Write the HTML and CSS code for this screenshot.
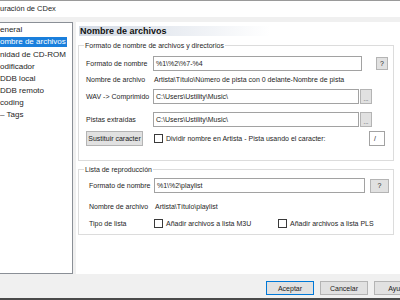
FILE: index.html
```html
<!DOCTYPE html>
<html lang="es">
<head>
<meta charset="utf-8">
<title>Configuración de CDex</title>
<link rel="stylesheet" href="styles.css">
</head>
<body>
<div class="window">
  <div class="titlebar">uración de CDex</div>
  <div class="main">
    <ul class="tree">
      <li>eneral</li>
      <li><span class="sel">ombre de archivos</span></li>
      <li>nidad de CD-ROM</li>
      <li>odificador</li>
      <li>DDB local</li>
      <li>DDB remoto</li>
      <li>coding</li>
      <li>– Tags</li>
    </ul>
    <div class="page">
      <div class="page-title">Nombre de archivos</div>

      <fieldset class="group g1">
        <legend>Formato de nombre de archivos y directorios</legend>
        <div class="row r1">
          <span class="lbl">Formato de nombre</span>
          <span class="input in-fmt">%1\%2\%7-%4</span>
          <span class="btn help1">?</span>
        </div>
        <div class="row r2">
          <span class="lbl">Nombre de archivo</span>
          <span class="val">Artista\Título\Número de pista con 0 delante-Nombre de pista</span>
        </div>
        <div class="row r3">
          <span class="lbl">WAV -&gt; Comprimido</span>
          <span class="input in-path">C:\Users\Ustility\Music\</span>
          <span class="btn browse">...</span>
        </div>
        <div class="row r4">
          <span class="lbl">Pistas extraídas</span>
          <span class="input in-path">C:\Users\Ustility\Music\</span>
          <span class="btn browse">...</span>
        </div>
        <div class="row r5">
          <span class="btn subst">Sustituir caracter</span>
          <span class="check c-split"></span>
          <span class="check-text">Dividir nombre en Artista - Pista usando el caracter:</span>
          <span class="input in-char">/</span>
        </div>
      </fieldset>

      <fieldset class="group g2">
        <legend>Lista de reproducción</legend>
        <div class="row q1">
          <span class="lbl">Formato de nombre</span>
          <span class="input in-pl">%1\%2\playlist</span>
          <span class="btn help2">?</span>
        </div>
        <div class="row q2">
          <span class="lbl">Nombre de archivo</span>
          <span class="val">Artista\Título\playlist</span>
        </div>
        <div class="row q3">
          <span class="lbl">Tipo de lista</span>
          <span class="option opt-m3u"><span class="check"></span><span class="check-text">Añadir archivos a lista M3U</span></span>
          <span class="option"><span class="check"></span><span class="check-text">Añadir archivos a lista PLS</span></span>
        </div>
      </fieldset>
    </div>
  </div>
  <div class="footer">
    <span class="btn fbtn default">Aceptar</span>
    <span class="btn fbtn">Cancelar</span>
    <span class="btn fbtn">Ayuda</span>
  </div>
</div>
</body>
</html>
```

FILE: styles.css
```css
html, body {
  margin: 0;
  padding: 0;
}
body {
  width: 400px;
  height: 300px;
  overflow: hidden;
  background: #f0f0f0;
  font-family: "Liberation Sans", Arial, sans-serif;
  color: #1e1e1e;
}
.window {
  height: 300px;
  box-sizing: border-box;
  border-bottom: 2px solid #4a4a4a;
  display: flex;
  flex-direction: column;
}
.titlebar {
  height: 17px;
  box-sizing: border-box;
  border-top: 1px solid #9a9a9a;
  background: #fff;
  font-size: 7.5px;
  line-height: 16px;
  white-space: nowrap;
}
.main {
  display: flex;
  margin-top: 5px;
  height: 252px;
}
.tree {
  width: 73px;
  box-sizing: border-box;
  margin: 0 3px 0 0;
  padding: 1px 0 0;
  list-style: none;
  background: #fff;
  border: 1px solid #8a8f96;
  border-left: none;
  font-size: 8px;
  overflow: hidden;
}
.tree li {
  height: 12px;
  line-height: 12px;
  white-space: nowrap;
}
.tree .sel {
  display: block;
  width: fit-content;
  height: 10px;
  line-height: 10px;
  margin-top: 1px;
  padding-right: 1px;
  background: #1a7fdc;
  color: #fff;
}
.page {
  flex: 1;
  min-width: 0;
  background: #fff;
  display: flex;
  flex-direction: column;
  font-size: 7px;
}
.page-title {
  margin: 4px 0 0 3px;
  height: 10px;
  width: 190px;
  padding-left: 1px;
  line-height: 10px;
  font-size: 9px;
  font-weight: bold;
  color: #111;
  background: linear-gradient(to right, #d3dae5, #ffffff);
}
.group {
  margin: 5px 6px 0 2px;
  border: 1px solid #dcdcdc;
  padding: 0 8px 0 7px;
  min-width: 0;
}
.group legend {
  margin-left: -2px;
  padding: 0 1px;
  font-size: 7px;
  line-height: 9px;
}
.g1 {
  padding-bottom: 14px;
}
.g2 {
  margin-top: 4px;
  padding-left: 10px;
  padding-bottom: 4px;
}
.g2 legend {
  margin-left: -5px;
}
.row {
  display: flex;
  align-items: center;
  height: 15px;
  white-space: nowrap;
}
.lbl {
  width: 67px;
  flex-shrink: 0;
}
.g2 .lbl {
  width: 65px;
}
.val {
  padding-left: 1px;
}
.input {
  box-sizing: border-box;
  height: 15px;
  line-height: 13px;
  border: 1px solid #a2a2a2;
  background: #fff;
  padding-left: 2px;
  flex-shrink: 0;
  overflow: hidden;
}
.btn {
  box-sizing: border-box;
  display: flex;
  align-items: center;
  justify-content: center;
  background: #e1e1e1;
  border: 1px solid #b4b4b4;
  flex-shrink: 0;
  color: #222;
}
.r1 { margin-top: 6px; }
.in-fmt { width: 209px; }
.help1 { width: 12px; height: 13px; margin-left: 14px; }
.r2 { margin-top: 1px; height: 14px; }
.r3 { margin-top: 3px; }
.r4 { margin-top: 8px; }
.in-path { width: 206px; }
.browse {
  width: 12px;
  height: 15px;
  margin-left: 1px;
  align-items: flex-end;
  line-height: 7px;
  font-size: 6px;
}
.r5 { margin-top: 4px; }
.subst { width: 57px; height: 15px; }
.check {
  display: inline-block;
  box-sizing: border-box;
  width: 9px;
  height: 9px;
  border: 1px solid #3a3a3a;
  background: #fff;
  flex-shrink: 0;
}
.c-split { margin-left: 11px; }
.check-text { margin-left: 3px; }
.in-char {
  width: 16px;
  margin-left: auto;
  padding-left: 4px;
}
.q1 { margin-top: 4px; }
.in-pl { width: 211px; }
.help2 { width: 19px; height: 14px; margin-left: 5px; }
.q2 { margin-top: 6px; height: 14px; }
.q3 { margin-top: 3px; height: 14px; }
.option {
  display: flex;
  align-items: center;
}
.opt-m3u { width: 124px; }
.footer {
  flex: 1;
  display: flex;
  gap: 6px;
  padding: 7px 0 0 266px;
  overflow: hidden;
}
.fbtn {
  width: 48px;
  height: 14px;
  font-size: 7px;
}
.fbtn.default {
  border-color: #0078d7;
}
```
